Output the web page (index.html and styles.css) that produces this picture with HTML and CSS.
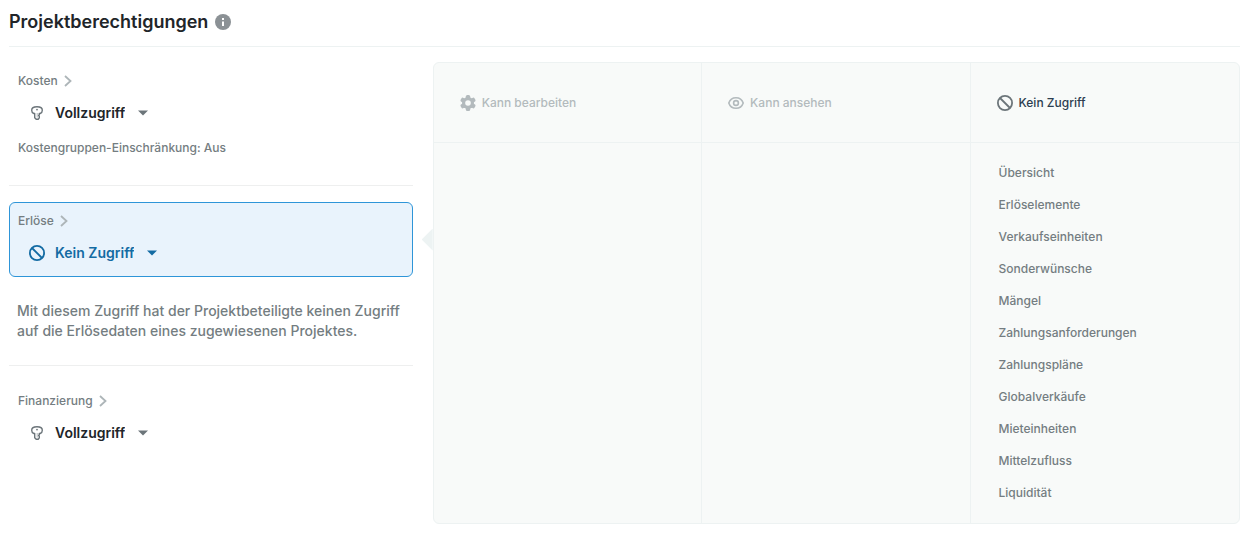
FILE: index.html
```html
<!DOCTYPE html>
<html lang="de">
<head>
    <meta charset="UTF-8">
    <meta name="viewport" content="width=device-width, initial-scale=1.0">
    <title>Projektberechtigungen</title>
    <link rel="stylesheet" href="styles.css">
</head>
<body>

<!-- Icons -->
<svg class="sprite" aria-hidden="true">
    <symbol id="icon-key" viewBox="0 0 16 16">
        <path d="M5.7 8.500H4.800C3.300 7.900 2.700 6.700 2.700 5.200 2.700 3 4.800 1.700 8 1.700s5.300 1.300 5.300 3.500c0 1.500-.6 2.700-2.100 3.300h-.9v1.300l-.7.700.7.800v1.600L9.200 14.200H7.200L5.700 12.800z" fill="none" stroke="currentColor" stroke-width="1.4" stroke-linejoin="round"/>
        <circle cx="8" cy="4.6" r="0.9" fill="currentColor"/>
        <path d="M8.2 8v4.5" fill="none" stroke="currentColor" stroke-width="0.5"/>
    </symbol>
    <symbol id="icon-ban" viewBox="0 0 16 16">
        <circle cx="8" cy="8" r="7.1" fill="none" stroke="currentColor" stroke-width="1.8"/>
        <path d="M3 3l10 10" fill="none" stroke="currentColor" stroke-width="1.8"/>
    </symbol>
    <symbol id="icon-chevron" viewBox="0 0 8 12">
        <path d="M1 1l5.5 5L1 11" fill="none" stroke="currentColor" stroke-width="1.8"/>
    </symbol>
    <symbol id="icon-caret" viewBox="0 0 10 6">
        <path d="M0 0.5h10L5 5.5z" fill="currentColor"/>
    </symbol>
    <symbol id="icon-gear" viewBox="0 0 16 16">
        <g fill="currentColor">
            <rect x="5.8" y="0" width="4.4" height="16" rx="1.6"/>
            <rect x="5.8" y="0" width="4.4" height="16" rx="1.6" transform="rotate(60 8 8)"/>
            <rect x="5.8" y="0" width="4.4" height="16" rx="1.6" transform="rotate(120 8 8)"/>
            <circle cx="8" cy="8" r="6"/>
        </g>
        <circle cx="8" cy="8" r="2.8" fill="#f8faf9"/>
    </symbol>
    <symbol id="icon-eye" viewBox="0 0 16 16">
        <path d="M.8 8C1.9 4.7 4.6 2.7 8 2.7S14.1 4.7 15.2 8c-1.1 3.3-3.8 5.3-7.2 5.3S1.9 11.3.8 8z" fill="none" stroke="currentColor" stroke-width="1.6"/>
        <circle cx="8" cy="8" r="2.4" fill="none" stroke="currentColor" stroke-width="1.6"/>
    </symbol>
    <symbol id="icon-info" viewBox="0 0 16 16">
        <circle cx="8" cy="8" r="8" fill="currentColor"/>
        <path d="M7 4h2v2H7zM7 7.5h2V12H7z" fill="#fff"/>
    </symbol>
</svg>

<main class="page">
    <header class="page-header">
        <h1>Projektberechtigungen</h1>
        <button type="button" class="info" aria-label="Info"><svg class="icon"><use href="#icon-info"/></svg></button>
    </header>

    <div class="layout">
        <div class="areas">
            <section class="area">
                <div class="card">
                    <button type="button" class="area-name">Kosten <svg class="chevron"><use href="#icon-chevron"/></svg></button>
                    <div class="access">
                        <label for="access-kosten" aria-label="Zugriff Kosten"><svg class="icon"><use href="#icon-key"/></svg></label>
                        <select id="access-kosten">
                            <option selected>Vollzugriff</option>
                            <option>Kein Zugriff</option>
                        </select>
                        <svg class="caret"><use href="#icon-caret"/></svg>
                    </div>
                </div>
                <p class="restriction">Kostengruppen-Einschränkung: Aus</p>
            </section>

            <section class="area">
                <div class="card active">
                    <button type="button" class="area-name">Erlöse <svg class="chevron"><use href="#icon-chevron"/></svg></button>
                    <div class="access">
                        <label for="access-erloese" aria-label="Zugriff Erlöse"><svg class="icon"><use href="#icon-ban"/></svg></label>
                        <select id="access-erloese">
                            <option>Vollzugriff</option>
                            <option selected>Kein Zugriff</option>
                        </select>
                        <svg class="caret"><use href="#icon-caret"/></svg>
                    </div>
                </div>
                <p class="description">Mit diesem Zugriff hat der Projektbeteiligte keinen Zugriff auf die Erlösedaten eines zugewiesenen Projektes.</p>
            </section>

            <section class="area">
                <div class="card">
                    <button type="button" class="area-name">Finanzierung <svg class="chevron"><use href="#icon-chevron"/></svg></button>
                    <div class="access">
                        <label for="access-finanzierung" aria-label="Zugriff Finanzierung"><svg class="icon"><use href="#icon-key"/></svg></label>
                        <select id="access-finanzierung">
                            <option selected>Vollzugriff</option>
                            <option>Kein Zugriff</option>
                        </select>
                        <svg class="caret"><use href="#icon-caret"/></svg>
                    </div>
                </div>
            </section>
        </div>

        <!-- Rechte des gewählten Bereichs -->
        <div class="rights">
            <section class="column">
                <h2><svg class="icon"><use href="#icon-gear"/></svg>Kann bearbeiten</h2>
            </section>
            <section class="column">
                <h2><svg class="icon"><use href="#icon-eye"/></svg>Kann ansehen</h2>
            </section>
            <section class="column filled">
                <h2><svg class="icon"><use href="#icon-ban"/></svg>Kein Zugriff</h2>
                <ul>
                    <li>Übersicht</li>
                    <li>Erlöselemente</li>
                    <li>Verkaufseinheiten</li>
                    <li>Sonderwünsche</li>
                    <li>Mängel</li>
                    <li>Zahlungsanforderungen</li>
                    <li>Zahlungspläne</li>
                    <li>Globalverkäufe</li>
                    <li>Mieteinheiten</li>
                    <li>Mittelzufluss</li>
                    <li>Liquidität</li>
                </ul>
            </section>
        </div>
    </div>
</main>

</body>
</html>
```

FILE: styles.css
```css
* {
    box-sizing: border-box;
}

body {
    margin: 0;
    font-family: Inter, "Liberation Sans", sans-serif;
    font-size: 12px;
    font-weight: 500;
    line-height: 20px;
    color: #747d81;
    background-color: #fff;
}

h1, h2, p, ul {
    margin: 0;
    padding: 0;
}

button, select {
    padding: 0;
    border: none;
    background: none;
    font: inherit;
    color: inherit;
    cursor: pointer;
}

.sprite {
    display: none;
}

.icon {
    display: block;
    width: 16px;
    height: 16px;
}

.page {
    padding: 10px 9px;
}

.page-header {
    display: flex;
    align-items: center;
    gap: 7px;
    padding-bottom: 12px;
    border-bottom: 1px solid #edf2f2;
}

.page-header h1 {
    font-size: 18px;
    line-height: 24px;
    font-weight: 600;
    color: #212529;
}

.info {
    color: #8b9195;
}

.layout {
    display: grid;
    grid-template-columns: 1fr 2fr;
    gap: 20px;
    align-items: start;
    padding-top: 15px;
}

/* Bereiche links */
.area + .area {
    padding-top: 16px;
    border-top: 1px solid #eeefef;
}

.card {
    position: relative;
    padding: 8px 8px 11px;
    border: 1px solid transparent;
    border-radius: 6px;
}

.card.active {
    background-color: #e9f3fc;
    border-color: #2e95d8;
}

/* Pfeil zur Rechtetabelle */
.card.active::after {
    content: "";
    position: absolute;
    top: 50%;
    right: -21px;
    width: 11px;
    height: 22px;
    margin-top: -11px;
    background-color: #edf3f3;
    clip-path: polygon(100% 0, 100% 100%, 0 50%);
}

.area-name {
    display: flex;
    align-items: center;
    gap: 6px;
}

.chevron {
    width: 8px;
    height: 12px;
    color: #adb5b8;
}

.access {
    display: flex;
    align-items: center;
    margin-top: 10px;
    padding-left: 11px;
    gap: 10px;
    color: #6c757a;
}

.access select {
    appearance: none;
    field-sizing: content;
    height: 24px;
    font-size: 14px;
    font-weight: 600;
    color: #212529;
}

.caret {
    width: 10px;
    height: 6px;
    margin-left: 3px;
    pointer-events: none;
}

.active .access,
.active .access select {
    color: #136ba3;
}

.restriction {
    padding: 1px 9px 27px;
}

.description {
    padding: 24px 8px;
    font-size: 14px;
}

/* Rechtetabelle */
.rights {
    display: grid;
    grid-template-columns: repeat(3, 1fr);
    background-color: #f8faf9;
    border: 1px solid #edf2f2;
    border-radius: 6px;
}

.column:not(:last-child) {
    border-right: 1px solid #edf2f2;
}

.column h2 {
    display: flex;
    align-items: center;
    gap: 6px;
    height: 80px;
    padding: 0 26px;
    border-bottom: 1px solid #edf2f2;
    font-size: 12px;
    font-weight: 500;
    color: #b3babd;
}

.column.filled h2 {
    color: #2c3e50;
}

.column.filled .icon {
    color: #6c757a;
}

.column ul {
    list-style: none;
    padding: 14px 28px;
}

.column li {
    padding: 6px 0;
}
```
